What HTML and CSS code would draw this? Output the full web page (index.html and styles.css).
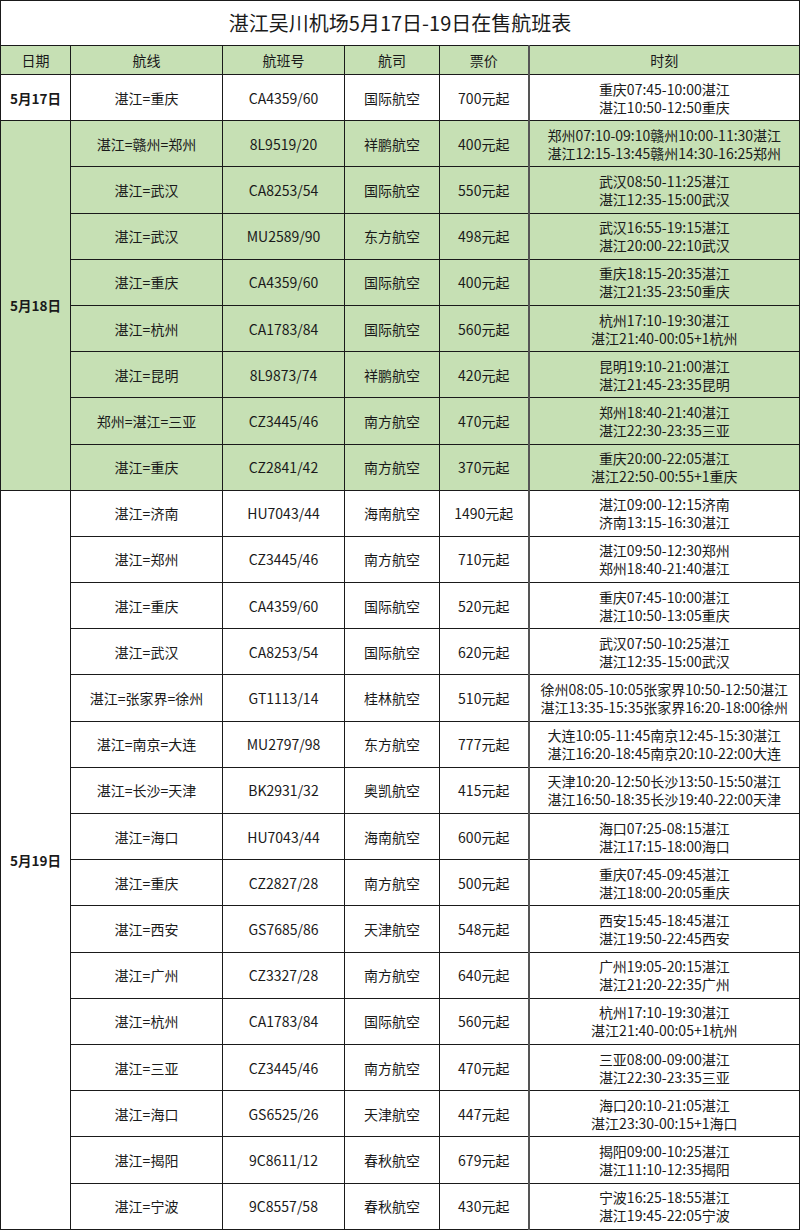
FILE: index.html
```html
<!DOCTYPE html>
<html lang="zh-CN">
<head>
<meta charset="utf-8">
<title>湛江吴川机场5月17日-19日在售航班表</title>
<link rel="stylesheet" href="styles.css">
</head>
<body>
<table class="sched">
  <colgroup>
    <col class="c-date"><col class="c-route"><col class="c-flt"><col class="c-air"><col class="c-price"><col class="c-time">
  </colgroup>
  <thead>
    <tr class="title-row"><th colspan="6" class="title">湛江吴川机场5月17日-19日在售航班表</th></tr>
    <tr class="head-row">
      <th>日期</th><th>航线</th><th>航班号</th><th>航司</th><th>票价</th><th class="tcol">时刻</th>
    </tr>
  </thead>
  <tbody>
    <tr>
      <td class="date">5月17日</td><td>湛江=重庆</td><td>CA4359/60</td><td>国际航空</td><td>700元起</td><td class="tcol">重庆07:45-10:00湛江<br>湛江10:50-12:50重庆</td>
    </tr>
  </tbody>
  <tbody class="green">
    <tr><td class="date" rowspan="8">5月18日</td><td>湛江=赣州=郑州</td><td>8L9519/20</td><td>祥鹏航空</td><td>400元起</td><td class="tcol">郑州07:10-09:10赣州10:00-11:30湛江<br>湛江12:15-13:45赣州14:30-16:25郑州</td></tr>
    <tr><td>湛江=武汉</td><td>CA8253/54</td><td>国际航空</td><td>550元起</td><td class="tcol">武汉08:50-11:25湛江<br>湛江12:35-15:00武汉</td></tr>
    <tr><td>湛江=武汉</td><td>MU2589/90</td><td>东方航空</td><td>498元起</td><td class="tcol">武汉16:55-19:15湛江<br>湛江20:00-22:10武汉</td></tr>
    <tr><td>湛江=重庆</td><td>CA4359/60</td><td>国际航空</td><td>400元起</td><td class="tcol">重庆18:15-20:35湛江<br>湛江21:35-23:50重庆</td></tr>
    <tr><td>湛江=杭州</td><td>CA1783/84</td><td>国际航空</td><td>560元起</td><td class="tcol">杭州17:10-19:30湛江<br>湛江21:40-00:05+1杭州</td></tr>
    <tr><td>湛江=昆明</td><td>8L9873/74</td><td>祥鹏航空</td><td>420元起</td><td class="tcol">昆明19:10-21:00湛江<br>湛江21:45-23:35昆明</td></tr>
    <tr><td>郑州=湛江=三亚</td><td>CZ3445/46</td><td>南方航空</td><td>470元起</td><td class="tcol">郑州18:40-21:40湛江<br>湛江22:30-23:35三亚</td></tr>
    <tr><td>湛江=重庆</td><td>CZ2841/42</td><td>南方航空</td><td>370元起</td><td class="tcol">重庆20:00-22:05湛江<br>湛江22:50-00:55+1重庆</td></tr>
  </tbody>
  <tbody>
    <tr><td class="date" rowspan="16">5月19日</td><td>湛江=济南</td><td>HU7043/44</td><td>海南航空</td><td>1490元起</td><td class="tcol">湛江09:00-12:15济南<br>济南13:15-16:30湛江</td></tr>
    <tr><td>湛江=郑州</td><td>CZ3445/46</td><td>南方航空</td><td>710元起</td><td class="tcol">湛江09:50-12:30郑州<br>郑州18:40-21:40湛江</td></tr>
    <tr><td>湛江=重庆</td><td>CA4359/60</td><td>国际航空</td><td>520元起</td><td class="tcol">重庆07:45-10:00湛江<br>湛江10:50-13:05重庆</td></tr>
    <tr><td>湛江=武汉</td><td>CA8253/54</td><td>国际航空</td><td>620元起</td><td class="tcol">武汉07:50-10:25湛江<br>湛江12:35-15:00武汉</td></tr>
    <tr><td>湛江=张家界=徐州</td><td>GT1113/14</td><td>桂林航空</td><td>510元起</td><td class="tcol">徐州08:05-10:05张家界10:50-12:50湛江<br>湛江13:35-15:35张家界16:20-18:00徐州</td></tr>
    <tr><td>湛江=南京=大连</td><td>MU2797/98</td><td>东方航空</td><td>777元起</td><td class="tcol">大连10:05-11:45南京12:45-15:30湛江<br>湛江16:20-18:45南京20:10-22:00大连</td></tr>
    <tr><td>湛江=长沙=天津</td><td>BK2931/32</td><td>奥凯航空</td><td>415元起</td><td class="tcol">天津10:20-12:50长沙13:50-15:50湛江<br>湛江16:50-18:35长沙19:40-22:00天津</td></tr>
    <tr><td>湛江=海口</td><td>HU7043/44</td><td>海南航空</td><td>600元起</td><td class="tcol">海口07:25-08:15湛江<br>湛江17:15-18:00海口</td></tr>
    <tr><td>湛江=重庆</td><td>CZ2827/28</td><td>南方航空</td><td>500元起</td><td class="tcol">重庆07:45-09:45湛江<br>湛江18:00-20:05重庆</td></tr>
    <tr><td>湛江=西安</td><td>GS7685/86</td><td>天津航空</td><td>548元起</td><td class="tcol">西安15:45-18:45湛江<br>湛江19:50-22:45西安</td></tr>
    <tr><td>湛江=广州</td><td>CZ3327/28</td><td>南方航空</td><td>640元起</td><td class="tcol">广州19:05-20:15湛江<br>湛江21:20-22:35广州</td></tr>
    <tr><td>湛江=杭州</td><td>CA1783/84</td><td>国际航空</td><td>560元起</td><td class="tcol">杭州17:10-19:30湛江<br>湛江21:40-00:05+1杭州</td></tr>
    <tr><td>湛江=三亚</td><td>CZ3445/46</td><td>南方航空</td><td>470元起</td><td class="tcol">三亚08:00-09:00湛江<br>湛江22:30-23:35三亚</td></tr>
    <tr><td>湛江=海口</td><td>GS6525/26</td><td>天津航空</td><td>447元起</td><td class="tcol">海口20:10-21:05湛江<br>湛江23:30-00:15+1海口</td></tr>
    <tr><td>湛江=揭阳</td><td>9C8611/12</td><td>春秋航空</td><td>679元起</td><td class="tcol">揭阳09:00-10:25湛江<br>湛江11:10-12:35揭阳</td></tr>
    <tr><td>湛江=宁波</td><td>9C8557/58</td><td>春秋航空</td><td>430元起</td><td class="tcol">宁波16:25-18:55湛江<br>湛江19:45-22:05宁波</td></tr>
  </tbody>
</table>
</body>
</html>
```

FILE: styles.css
```css
html, body {
  margin: 0;
  padding: 0;
  background: #ffffff;
}

body {
  font-family: "Noto Sans CJK SC", "Noto Sans", "DejaVu Sans", sans-serif;
  font-size: 14px;
  color: #1a1a1a;
}

.sched {
  width: 799px;
  border-collapse: collapse;
  table-layout: fixed;
}

.c-date { width: 70px; }
.c-route { width: 152px; }
.c-flt { width: 122px; }
.c-air { width: 95px; }
.c-price { width: 89px; }
.c-time { width: 271px; }

.sched th,
.sched td {
  border: 1px solid #1a1a1a;
  text-align: center;
  vertical-align: middle;
  padding: 0 1px;
  font-weight: normal;
  line-height: 18px;
  white-space: nowrap;
  overflow: hidden;
}

.title-row th {
  height: 44px;
  font-size: 20px;
  line-height: 26px;
  background: #ffffff;
}

.head-row th {
  height: 28px;
  background: #c6e0b4;
}

.sched tbody td {
  height: 45.2px;
}

.green td {
  background: #c6e0b4;
}

.sched .date {
  font-weight: bold;
  font-size: 13.5px;
}

.sched .tcol {
  border-left: 2px solid #555555;
}
```
